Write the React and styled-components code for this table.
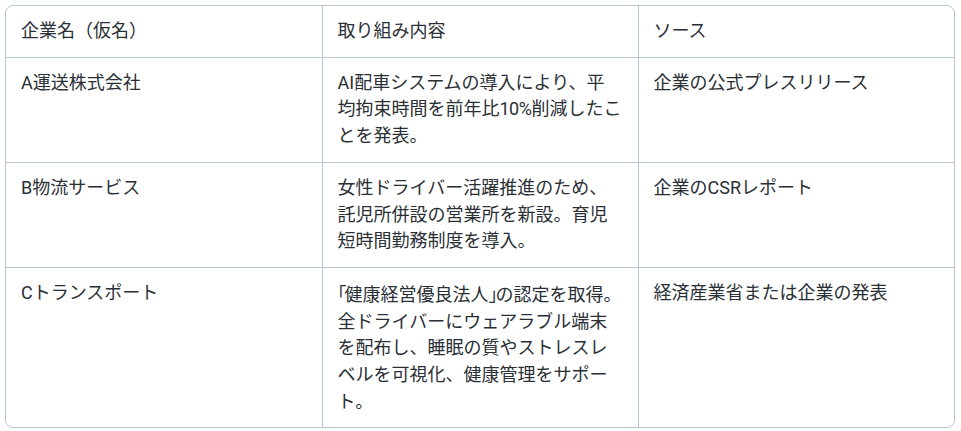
import React from "react";
import styled, { createGlobalStyle } from "styled-components";

const Global = createGlobalStyle`
  html, body { margin: 0; padding: 0; background: #ffffff; }
  body { font-family: Roboto, "Noto Sans CJK JP", sans-serif; color: #2a2f35; }
`;

const Page = styled.div`
  padding: 5px 6px 0 5px;
`;

const Frame = styled.div`
  border: 1px solid #b7c6d2;
  border-radius: 8px;
  overflow: hidden;
`;

const Table = styled.table`
  width: 100%;
  border-collapse: collapse;
  table-layout: fixed;
  font-size: 18px;
  line-height: 26.7px;
`;

const Cell = styled.td`
  padding: 12px 15px;
  vertical-align: top;
  text-align: left;
  font-weight: 400;
  border-right: 1px solid #b7c6d2;
  border-bottom: ${(p) => (p.$last ? "none" : "1px solid #b7c6d2")};
  &:last-child { border-right: none; }
`;

const Head = styled(Cell).attrs({ as: "th" })``;

const Bracket = styled.span`
  font-family: "Noto Sans CJK JP", sans-serif;
  font-feature-settings: "halt";
  letter-spacing: -2px;
`;

const Figure = styled.span`
  letter-spacing: -0.5px;
`;

const renderText = (t) =>
  t.split(/([「」]|\d+%)/).map((part, k) => {
    if (part === "「" || part === "」") return <Bracket key={k}>{part}</Bracket>;
    if (/^\d+%$/.test(part)) return <Figure key={k}>{part}</Figure>;
    return part;
  });

const rows = [
  ["A運送株式会社", "AI配車システムの導入により、平均拘束時間を前年比10%削減したことを発表。", "企業の公式プレスリリース"],
  ["B物流サービス", "女性ドライバー活躍推進のため、託児所併設の営業所を新設。育児短時間勤務制度を導入。", "企業のCSRレポート"],
  ["Cトランスポート", "「健康経営優良法人」の認定を取得。全ドライバーにウェアラブル端末を配布し、睡眠の質やストレスレベルを可視化、健康管理をサポート。", "経済産業省または企業の発表"],
];

export default function App() {
  return (
    <>
      <Global />
      <Page>
        <Frame>
          <Table>
            <thead>
              <tr>
                <Head>企業名（仮名）</Head>
                <Head>取り組み内容</Head>
                <Head>ソース</Head>
              </tr>
            </thead>
            <tbody>
              {rows.map((r, i) => (
                <tr key={i}>
                  {r.map((c, j) => (
                    <Cell key={j} $last={i === rows.length - 1}>{renderText(c)}</Cell>
                  ))}
                </tr>
              ))}
            </tbody>
          </Table>
        </Frame>
      </Page>
    </>
  );
}
